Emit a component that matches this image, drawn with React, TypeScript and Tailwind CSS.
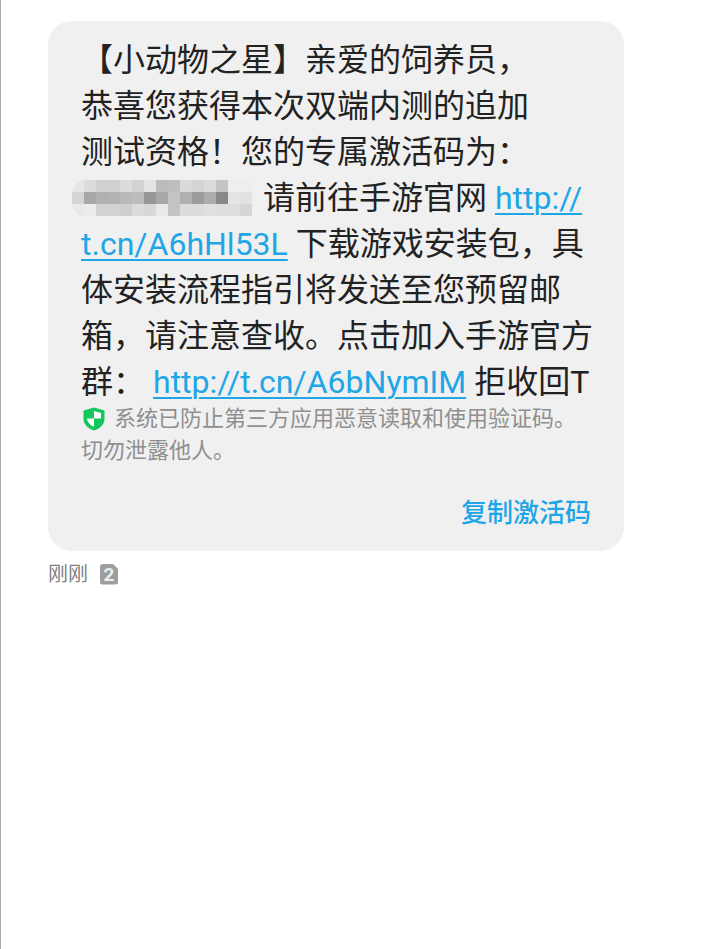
const PIXELS = [
  ["#e6e6e6", "#dcdcdc", "#d0d0d0", "#d0d0d0", "#dcdcdc", "#d2d2d2", "#e4e4e4", "#bcbcbc", "#bebebe", "#dadada", "#d4d4d4", "#dcdcdc", "#c4c4c4", "#eeeeee", "#eeeeee"],
  ["#d5d5d5", "#a8a8a8", "#b0b0b0", "#b2b2b2", "#bababa", "#bcbcbc", "#989898", "#a8a8a8", "#c4c4c4", "#b0b0b0", "#9c9c9c", "#acacac", "#888888", "#e4e4e4", "#e2e2e2"],
  ["#e8e8e8", "#ececec", "#d2d2d2", "#d2d2d2", "#cfcfcf", "#dcdcdc", "#d8d8d8", "#eaeaea", "#c4c4c4", "#dcdcdc", "#dcdcdc", "#e0e0e0", "#dedede", "#dedede", "#d6d6d6"],
];

function Mosaic() {
  return (
    <svg width="184" height="46" viewBox="0 0 184 46" className="inline-block align-top ml-[-9px] mr-[9px]">
      <defs>
        <clipPath id="mosaic-clip">
          <rect x="0" y="5" width="220" height="36" rx="14" />
        </clipPath>
      </defs>
      <g clipPath="url(#mosaic-clip)" shapeRendering="crispEdges">
        {PIXELS.map((row, y) =>
          row.map((fill, x) => <rect key={`${x}-${y}`} x={x * 12} y={5 + y * 12} width="12" height="12" fill={fill} />)
        )}
      </g>
    </svg>
  );
}

function Shield() {
  return (
    <svg width="22" height="24" viewBox="0 0 22 24" className="shrink-0 ml-[2px]">
      <path d="M11 0.5 L21.5 3.5 V11.5 C21.5 17.5 17 21.5 11 23.5 C5 21.5 0.5 17.5 0.5 11.5 V3.5 Z" fill="#14c75a" />
      <path d="M11 4 L18 6 V11.5 H11 Z M11 11.5 V19.8 C7.5 18.4 4.4 15.4 4 11.5 Z" fill="#ffffff" />
    </svg>
  );
}

function Link({ children }: { children: string }) {
  return <span className="text-[#1ea6e6] underline underline-offset-[4px] decoration-2">{children}</span>;
}

export default function App() {
  return (
    <div className="h-[949px] bg-white border-l border-[#a8a8a8] overflow-hidden pt-[21px] pl-[47px] font-['Roboto','Noto_Sans_CJK_SC',sans-serif]">
      <div className="w-[576px] h-[530px] bg-[#f0f0f0] rounded-[24px] pt-4 pl-[33px] pr-[33px]">
        <div className="text-[32px] leading-[46px] text-[#222222] whitespace-nowrap">
          <p>【小动物之星】亲爱的饲养员，</p>
          <p>恭喜您获得本次双端内测的追加</p>
          <p>测试资格！您的专属激活码为：</p>
          <p>
            <Mosaic />
            <span className="ml-[-2px]">请前往手游官网</span> <Link>http://</Link>
          </p>
          <p>
            <Link>t.cn/A6hHl53L</Link> 下载游戏安装包，具
          </p>
          <p>体安装流程指引将发送至您预留邮</p>
          <p>箱，请注意查收。点击加入手游官方</p>
          <p>
            群：<span className="ml-2"><Link>http://t.cn/A6bNymIM</Link></span> 拒收回T
          </p>
        </div>

        <div className="mt-[-2px] text-[22px] leading-8 text-[#8f8f8f] whitespace-nowrap">
          <p className="flex items-center gap-[9px]">
            <Shield />
            系统已防止第三方应用恶意读取和使用验证码。
          </p>
          <p>切勿泄露他人。</p>
        </div>

        <div className="mt-7 text-right text-[26px] leading-9 font-medium text-[#1ea6e6]">复制激活码</div>
      </div>

      <div className="mt-[12px] flex items-center gap-3 h-[22px] text-[#808080]">
        <span className="text-[20px] leading-[22px]">刚刚</span>
        <span className="w-[18px] h-[21px] rounded-[3px] bg-[#9e9e9e] text-[#f0f0f0] text-[19px] leading-[21px] font-bold text-center [clip-path:polygon(0_0,70%_0,100%_25%,100%_100%,0_100%)]">2</span>
      </div>
    </div>
  );
}
